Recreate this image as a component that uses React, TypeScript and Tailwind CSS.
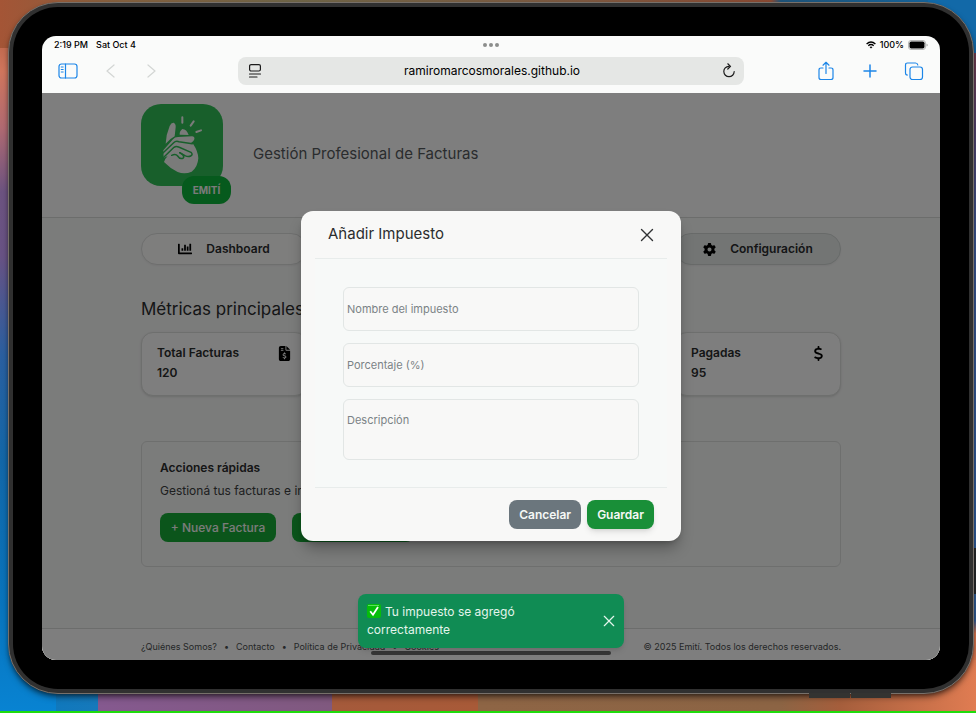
import type { ReactNode } from 'react';
import { FaChartBar } from 'react-icons/fa';
import { FaDollarSign, FaFileInvoiceDollar, FaGear } from 'react-icons/fa6';

function SnapLogo() {
  return (
    <div className="relative h-[100px] w-[90px] shrink-0">
      <div className="h-[82px] w-[82px] overflow-hidden rounded-[20px] bg-[#30be57]">
        <svg viewBox="0 0 246 246" className="h-full w-full" role="img" aria-label="Emití">
          <g fill="#f4f6f4">
            <path d="M86 66Q91 55 98 56Q105 59 104 70L101 97Q86 105 74 119Q75 92 86 66Z" />
            <path d="M116 92Q115 82 124 75Q137 75 143 93Z" />
            <path d="M67 139L96 106Q101 99 111 99L153 97Q162 98 160 106Q158 113 150 117L157 121Q171 142 172 163Q170 190 152 203Q131 212 110 204Q86 192 69 174Q72 164 80 156L68 162Z" />
          </g>
          <g fill="none" stroke="#30be57" strokeWidth="4.5" strokeLinecap="round" strokeLinejoin="round">
            <path d="M65 148L98 116Q104 110 114 113L154 119" />
            <path d="M66 162L99 130Q105 125 113 129L150 145Q157 152 149 156Q142 160 132 155L116 146" />
            <path d="M92 154Q104 148 110 156Q116 166 126 163Q131 158 125 152L116 146" />
          </g>
          <g stroke="#f4f6f4" strokeWidth="6" strokeLinecap="round">
            <path d="M124 40V56M158 52L149 65M180 79L166 84" />
          </g>
        </svg>
      </div>
      <span className="absolute right-0 bottom-0 flex h-7 w-[49px] items-center justify-center rounded-xl bg-[#0cb43a] text-[10px] font-bold text-[#f4f6f4]">
        EMITÍ
      </span>
    </div>
  );
}

function StatusBar() {
  return (
    <div className="grid h-[18px] grid-cols-3 items-center px-3 text-[9px] font-medium text-black">
      <div className="flex gap-2">
        <span>2:19 PM</span>
        <span>Sat Oct 4</span>
      </div>
      <div className="flex justify-center gap-[2px]">
        <i className="size-1 rounded-full bg-[#8c8e8c]" />
        <i className="size-1 rounded-full bg-[#8c8e8c]" />
        <i className="size-1 rounded-full bg-[#8c8e8c]" />
      </div>
      <div className="flex items-center justify-end gap-1">
        <svg viewBox="0 0 20 15" className="h-2 w-[10px]" fill="none" stroke="#000" strokeWidth="2.8">
          <path d="M1.2 5.4Q10 -2.4 18.8 5.4M4.6 9Q10 4.2 15.4 9" />
          <path d="M7 11.4Q10 9.2 13 11.4L10 14.6Z" fill="#000" stroke="none" />
        </svg>
        <span>100%</span>
        <svg viewBox="0 0 40 20" className="h-[10px] w-5">
          <rect x="1" y="1" width="34" height="18" rx="5" fill="none" stroke="#a8aaa8" strokeWidth="1.6" />
          <rect x="3" y="3" width="30" height="14" rx="3.5" />
          <path d="M37 7V13Q39.500 12 39.500 10T37 7Z" fill="#a8aaa8" />
        </svg>
      </div>
    </div>
  );
}

function ToolButton({ label, dim, children }: { label: string; dim?: boolean; children: ReactNode }) {
  return (
    <button aria-label={label} className={dim ? 'text-[#d3d6d4]' : 'text-[#1c86e8]'}>
      <svg viewBox="0 0 20 20" className="size-5" fill="none" stroke="currentColor" strokeWidth="1.2" strokeLinecap="round" strokeLinejoin="round">
        {children}
      </svg>
    </button>
  );
}

function BrowserBar() {
  return (
    <div className="grid h-[39px] grid-cols-[1fr_506px_1fr] items-start pt-[3px]">
      <div className="flex h-7 items-center gap-[22px] pl-4">
        <ToolButton label="Sidebar">
          <rect x="1" y="3" width="18" height="14" rx="2.500" />
          <path d="M7.500 3V17" />
          <path d="M3.200 6H5.200M3.200 8.500H5.200M3.200 11H5.200" strokeWidth="1" />
        </ToolButton>
        <ToolButton label="Back" dim>
          <path d="M14 4L7 10L14 16" />
        </ToolButton>
        <ToolButton label="Forward" dim>
          <path d="M6 4L13 10L6 16" />
        </ToolButton>
      </div>
      <div className="flex h-7 items-center rounded-lg bg-[#e5e7e5] pr-2 pl-[10px] text-[#1c1c1c]">
        <svg viewBox="0 0 14 16" className="h-4 w-[14px]" fill="none" stroke="currentColor" strokeWidth="1.200" strokeLinecap="round">
          <rect x="1.600" y="1.600" width="10.800" height="6.400" rx="1.500" />
          <path d="M1.500 11H12.500M1.500 14H9" />
        </svg>
        <input
          aria-label="Address"
          readOnly
          value="ramiromarcosmorales.github.io"
          className="min-w-0 flex-1 bg-transparent text-center text-[12px] text-black outline-none"
        />
        <button aria-label="Reload">
          <svg viewBox="0 0 14 16" className="h-4 w-[14px]" fill="none" stroke="currentColor" strokeWidth="1.200" strokeLinecap="round" strokeLinejoin="round">
            <path d="M6.800 3.300A5.200 5.200 0 1 0 12.200 8.600M5.800 .8L8.500 3.400L5.800 6" />
          </svg>
        </button>
      </div>
      <div className="flex h-7 items-center justify-end gap-6 pr-4">
        <ToolButton label="Share">
          <path d="M7 7H5Q3 7 3 9V16.500Q3 18.500 5 18.500H15Q17 18.500 17 16.500V9Q17 7 15 7H13M10 12.500V1.500M7 4.200L10 1.300L13 4.200" />
        </ToolButton>
        <ToolButton label="New tab">
          <path d="M10 4V16M4 10H16" strokeWidth="1.500" />
        </ToolButton>
        <ToolButton label="Tabs">
          <rect x="6" y="6" width="12.500" height="12.500" rx="2.500" />
          <path d="M3.500 14H3.300Q1.500 14 1.500 12V4Q1.500 2 3.500 2H11.500Q13.500 2 13.800 4" />
        </ToolButton>
      </div>
    </div>
  );
}

function MetricCard({ title, value, icon, className }: { title: string; value: string; icon: ReactNode; className: string }) {
  return (
    <article className={`${className} flex h-16 justify-between rounded-xl border border-[#dcdedc] bg-[#fdfdfc] pt-[10px] pr-[14px] pl-[15px] shadow-sm`}>
      <div className="text-[12px] leading-5 font-semibold whitespace-nowrap">
        <h3>{title}</h3>
        <p>{value}</p>
      </div>
      <span className="pt-[3px] text-[15px] text-black">{icon}</span>
    </article>
  );
}

function Dashboard() {
  const pill = 'flex h-8 items-center justify-center gap-[14px] rounded-full border text-[12px] font-semibold shadow-xs';
  return (
    <div className="flex flex-1 flex-col bg-[#f7f8f7] text-[#2a2c2d]">
      <header className="border-b border-[#d8dad8] bg-[#fdfdfc] pt-[11px] pb-[13px]">
        <div className="mx-auto flex max-w-[700px] items-center gap-[22px]">
          <SnapLogo />
          <p className="text-[15px] text-[#55595c]">Gestión Profesional de Facturas</p>
        </div>
      </header>

      <main className="mx-auto w-full max-w-[700px] flex-1 pt-[15px]">
        <nav className="grid grid-cols-4 gap-3">
          <button className={`${pill} border-[#dcdedc] bg-[#fcfcfb]`}>
            <FaChartBar className="size-[14px] text-black" />
            Dashboard
          </button>
          <button className={`${pill} col-start-4 border-[#d0d5d3] bg-[#e6ebe9]`}>
            <FaGear className="size-[13px] text-black" />
            Configuración
          </button>
        </nav>

        <h2 className="mt-8 text-[17px] leading-6">Métricas principales</h2>
        <section className="mt-[11px] grid grid-cols-4 gap-3">
          <MetricCard title="Total Facturas" value="120" icon={<FaFileInvoiceDollar />} className="col-start-1" />
          <MetricCard title="Pagadas" value="95" icon={<FaDollarSign />} className="col-start-4" />
        </section>

        <section className="mt-[45px] h-[126px] rounded-md border border-[#dcdedc] px-[18px] pt-4 text-[12px]">
          <h3 className="leading-5 font-semibold">Acciones rápidas</h3>
          <p className="mt-[3px] leading-5 text-[#3c3e40]">Gestioná tus facturas e impuestos</p>
          <div className="mt-3 flex gap-4">
            <button className="h-[29px] w-[116px] rounded-lg bg-[#17aa36] font-medium text-[#f7f8f7]">+ Nueva Factura</button>
            <button aria-label="Nuevo impuesto" className="h-[29px] w-[122px] rounded-lg bg-[#17aa36]" />
          </div>
        </section>
      </main>

      <footer className="border-t border-[#d8dad8] bg-[#fdfdfc] text-[9px] text-[#4a4e50]">
        <div className="mx-auto flex h-[31px] max-w-[700px] items-center justify-between pt-[5px]">
          <div className="flex gap-[7px]">
            <a href="#somos">¿Quiénes Somos?</a>
            <span>•</span>
            <a href="#contacto">Contacto</a>
            <span>•</span>
            <a href="#privacidad">Política de Privacidad</a>
            <span>•</span>
            <a href="#cookies">Cookies</a>
          </div>
          <p>© 2025 Emití. Todos los derechos reservados.</p>
        </div>
      </footer>
    </div>
  );
}

function CloseIcon({ className }: { className: string }) {
  return (
    <svg viewBox="0 0 14 14" className={className} fill="none" stroke="currentColor" strokeWidth="1.400" strokeLinecap="round">
      <path d="M1.500 1.500L12.500 12.500M12.500 1.500L1.500 12.500" />
    </svg>
  );
}

function TaxDialog() {
  const field = 'block w-full resize-none rounded-md border border-[#e2e6e5] bg-[#f8f8f7] px-[3px] text-[11px] outline-none placeholder:text-[#7b8386] placeholder:opacity-100';
  return (
    <div role="dialog" aria-label="Añadir Impuesto" className="w-[380px] rounded-xl bg-[#f8f8f7] px-[14px] shadow-lg shadow-black/30">
      <div className="flex h-12 items-center justify-between border-b border-[#e8eceb] px-[13px]">
        <h2 className="text-[15px] text-[#2b2d2e]">Añadir Impuesto</h2>
        <button aria-label="Cerrar" className="text-[#303233]">
          <CloseIcon className="size-[14px]" />
        </button>
      </div>
      <form className="flex flex-col gap-3 bg-[#f7f9f8] px-7 pt-7 pb-[27px]">
        <input aria-label="Nombre del impuesto" placeholder="Nombre del impuesto" className={`${field} h-11`} />
        <input aria-label="Porcentaje (%)" placeholder="Porcentaje (%)" className={`${field} h-11`} />
        <textarea aria-label="Descripción" placeholder="Descripción" className={`${field} h-[61px] pt-3`} />
      </form>
      <div className="flex h-[54px] items-center justify-end gap-[6px] border-t border-[#e8eceb] px-[13px] text-[12px] font-semibold text-[#f5f8f6]">
        <button className="h-[29px] rounded-lg bg-[#6b767d] px-[10px]">Cancelar</button>
        <button className="h-[29px] rounded-lg bg-[#198f38] px-[10px] shadow-md">Guardar</button>
      </div>
    </div>
  );
}

function Toast() {
  return (
    <div role="status" className="flex w-[266px] items-center justify-between rounded-lg bg-[#108c54] p-[9px] text-[12px] leading-[18px] text-[#e4f5ec] shadow-md">
      <p className="w-[170px]">
        <svg viewBox="0 0 14 14" className="mr-1 inline size-[14px] align-[-2px]" role="img" aria-label="Listo">
          <rect width="14" height="14" rx="2" fill="#06bd0b" />
          <path d="M1 1.500H12" stroke="#5be05d" strokeWidth="1" />
          <path d="M3.200 7.200L6 10.800L11 3" fill="none" stroke="#fff" strokeWidth="1.800" />
        </svg>
        Tu impuesto se agregó correctamente
      </p>
      <button aria-label="Cerrar aviso">
        <CloseIcon className="size-3" />
      </button>
    </div>
  );
}

export default function App() {
  return (
    <div className="flex min-h-screen flex-col border-b-2 border-[#1fdc0c] bg-[linear-gradient(to_right,#0877be_0%,#1679bb_10%,#85598f_10%,#80597f_34%,#a55a3b_34%,#a85a38_49%,#8e6545_49%,#8c6444_80%,#a55e3c_86%,#e07c52_100%)] font-['Inter','Liberation_Sans',sans-serif]">
      <div className="relative flex flex-1 flex-col pt-[2px] pr-[2px] pb-[17px] pl-2">
        <div className="absolute inset-y-0 left-0 w-14 bg-[linear-gradient(to_bottom,#a45536_0%,#d0765d_10%,#b06a72_18%,#6c5380_27%,#685284_36%,#2a5fa0_50%,#1267a8_65%,#0874bd_85%,#0883d2_100%)]" />
        <div className="absolute inset-x-0 top-0 h-12 bg-[linear-gradient(to_right,#a45536_0%,#85603f_12%,#6f6548_30%,#7d5840_60%,#8a4a33_79%,#1f5378_80%,#1468a5_100%)]" />
        <div className="absolute top-0 right-0 h-[660px] w-12 bg-[linear-gradient(to_bottom,#1269a8_0%,#1269a8_8%,#713d50_8%,#51426e_20%,#3a5590_36%,#2d5b9c_83%,#27292b_83%,#27292b_90%,#315b95_90%,#315b95_94%,#d9754d_96%,#d9754d_100%)]" />

        <div className="relative flex flex-1 flex-col rounded-[50px] border border-[#77706a] bg-[#303030] p-1 shadow-md shadow-black/50">
          <i className="absolute -bottom-[5px] left-[800px] flex h-[5px] w-[82px] gap-px">
            <b className="flex-1 bg-[#333331]" />
            <b className="flex-1 bg-[#333331]" />
          </i>
          <div className="flex flex-1 flex-col rounded-[45px] bg-black p-[29px]">
            <div className="flex flex-1 flex-col overflow-hidden rounded-[14px] bg-[#fafbfa]">
              <StatusBar />
              <BrowserBar />
              <div className="relative flex flex-1 flex-col">
                <Dashboard />
                <div className="absolute inset-0 flex items-center justify-center bg-black/50 pb-px">
                  <TaxDialog />
                </div>
                <div className="absolute inset-x-0 bottom-[5px] flex justify-center">
                  <i className="h-1 w-60 rounded-full bg-[#363636]" />
                </div>
                <div className="absolute inset-x-0 bottom-3 flex justify-center">
                  <Toast />
                </div>
              </div>
            </div>
          </div>
        </div>
      </div>
    </div>
  );
}
